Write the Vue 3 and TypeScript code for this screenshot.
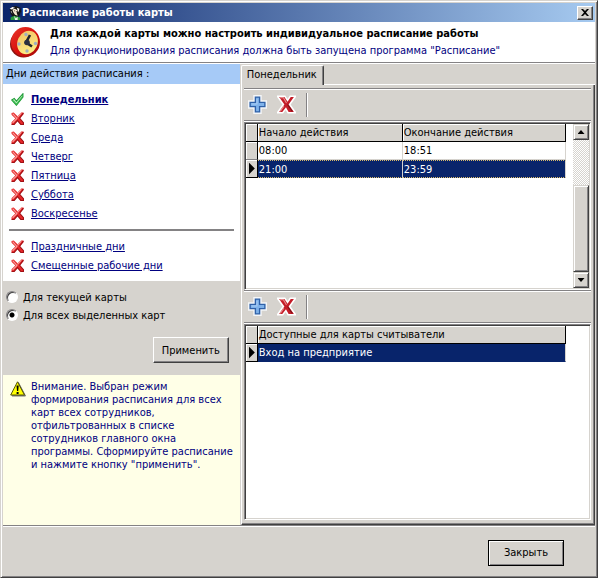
<script setup lang="ts">
import { ref } from 'vue'

interface Day {
  name: string
  active: boolean
}

const weekDays: Day[] = [
  { name: 'Понедельник', active: true },
  { name: 'Вторник', active: false },
  { name: 'Среда', active: false },
  { name: 'Четверг', active: false },
  { name: 'Пятница', active: false },
  { name: 'Суббота', active: false },
  { name: 'Воскресенье', active: false },
]
const specialDays: Day[] = [
  { name: 'Праздничные дни', active: false },
  { name: 'Смещенные рабочие дни', active: false },
]
const dayGroups: Day[][] = [weekDays, specialDays]

const intervals = [
  { start: '08:00', end: '18:51' },
  { start: '21:00', end: '23:59' },
]
const readers = ['Вход на предприятие']

const selectedDay = ref('Понедельник')
const selectedInterval = ref(1)
const selectedReader = ref(0)
const scope = ref<'current' | 'all'>('all')
</script>

<template>
  <div class="window">
    <header class="titlebar">
      <svg class="app-icon" viewBox="0 0 16 16" aria-hidden="true">
        <path d="M2 4l2-3 5-1 5 2 1 4-2 5-3 2H6L3 9z" fill="#151515" />
        <path d="M5 4l3-1 3 2-1 3 1 3-3-1-2-3z" fill="#f6e8d0" />
        <path d="M10 2l3 1-1 4zM2 3l3-2 3 1-4 2zM3 6l1 0 1 3z" fill="#fff" />
        <path d="M7 5h1v1H7zM9 6h1v1H9z" fill="#222" />
        <path d="M3 16v-3l4-2 3 1 4 1v3z" fill="#2a9a3c" />
        <path d="M7 11l2 3 2-2v4H8z" fill="#e8f4e8" />
      </svg>
      <h1>Расписание работы карты</h1>
      <button class="close" type="button" aria-label="Закрыть окно">
        <svg viewBox="0 0 8 7"><path d="M0 0h2l2 2 2-2h2L5 3.500 8 7H6L4 5 2 7H0l3-3.500z" /></svg>
      </button>
    </header>

    <section class="banner">
      <svg class="clock" viewBox="0 0 32 32" aria-hidden="true">
        <defs>
          <linearGradient id="rim" x1="0" y1="0" x2="1" y2="1">
            <stop offset="0" stop-color="#e8382c" />
            <stop offset=".5" stop-color="#d8100c" />
            <stop offset="1" stop-color="#a00a08" />
          </linearGradient>
          <linearGradient id="dial" x1="0" y1="0" x2="1" y2="1">
            <stop offset="0" stop-color="#f2c060" />
            <stop offset="1" stop-color="#fff58c" />
          </linearGradient>
        </defs>
        <ellipse cx="14.500" cy="18" rx="13.500" ry="13.500" fill="#8e1410" />
        <ellipse cx="16.500" cy="16" rx="14.500" ry="15" fill="url(#rim)" />
        <ellipse cx="18.500" cy="16.500" rx="10" ry="12" fill="url(#dial)" transform="rotate(25 18.500 16.500)" />
        <g fill="#9fb0c0">
          <circle cx="17" cy="8.500" r="1.700" />
          <circle cx="26.500" cy="17.500" r="1.700" />
          <circle cx="18" cy="25" r="1.700" />
          <circle cx="10" cy="18" r="1.700" />
        </g>
        <path d="M21 9l-4 7.500 6 4" fill="none" stroke="#23262e" stroke-width="2.600" />
        <circle cx="18" cy="16.500" r="2.800" fill="#2c3140" />
      </svg>
      <div>
        <h2>Для каждой карты можно настроить индивидуальное расписание работы</h2>
        <p>Для функционирования расписания должна быть запущена программа "Расписание"</p>
      </div>
    </section>

    <main class="content">
      <aside class="side">
        <h3>Дни действия расписания :</h3>
        <nav class="days">
          <ul v-for="(group, g) in dayGroups" :key="g">
            <li v-for="day in group" :key="day.name">
              <svg v-if="day.active" viewBox="0 0 12 12" aria-hidden="true">
                <path d="M.7 6.500l2.300-1.500 2 2.500L11 .7v3L5 11.300z" fill="#b9f2bd" stroke="#1d9a35" />
                <path d="M2 7l3 3.500L11 3" fill="none" stroke="#36b54a" />
              </svg>
              <svg v-else viewBox="0 0 12 12" aria-hidden="true">
                <path d="M.5 1l2-.5L6 4 9.500.5h2V2L8 5.800l3.500 4v1.700H9L6 8l-3 3.500H.5V9.500L4 6 .5 2.500z" fill="#e8282a" />
                <path d="M11.500 1L8 5.800l3.500 4v1.700H9L6 8l-3 3.500H.5" fill="none" stroke="#a01014" />
                <path d="M1.500 1.500L5.500 6 1.500 10M6 5l3.500-4" fill="none" stroke="#f7a3a0" />
              </svg>
              <a href="#" :class="{ current: day.name === selectedDay }" @click.prevent="selectedDay = day.name">{{ day.name }}</a>
            </li>
          </ul>
        </nav>

        <form class="scope" @submit.prevent>
          <label><input v-model="scope" type="radio" name="scope" value="current" />Для текущей карты</label>
          <label><input v-model="scope" type="radio" name="scope" value="all" />Для всех выделенных карт</label>
          <button class="button" type="submit">Применить</button>
        </form>

        <div class="note">
          <svg viewBox="0 0 16 16" aria-hidden="true">
            <path d="M8.500 1.500L15.500 15H2z" fill="#777" stroke="#777" stroke-linejoin="round" />
            <path d="M7.500.800L14.500 14H.700z" fill="#ff0" stroke="#54540a" stroke-linejoin="round" />
            <path d="M6.500 4.500h2.200L8.200 10H7z" fill="#000" />
            <path d="M6.600 11h2v2h-2z" fill="#000" />
          </svg>
          <p>Внимание. Выбран режим формирования расписания для всех карт всех сотрудников, отфильтрованных в списке сотрудников главного окна программы. Сформируйте расписание и нажмите кнопку "применить".</p>
        </div>
      </aside>

      <section class="schedule">
        <div class="tabs" role="tablist">
          <button class="tab" type="button" role="tab" aria-selected="true">{{ selectedDay }}</button>
        </div>
        <div class="page">
          <template v-for="part in ['intervals', 'readers']" :key="part">
            <div class="toolbar">
              <button type="button" aria-label="Добавить">
                <svg viewBox="0 0 18 18">
                  <path d="M6 1h6v5h5v6h-5v5H6v-5H1V6h5z" fill="#fff" stroke="#f4f6f8" stroke-width="2" />
                  <path d="M7 2h4v5h5v4h-5v5H7v-5H2V7h5z" fill="#7fb2ea" stroke="#2f61a8" stroke-width="1.300" />
                  <path d="M8.500 3.500v5h-5" fill="none" stroke="#a9cdf4" />
                </svg>
              </button>
              <button type="button" aria-label="Удалить">
                <svg viewBox="0 0 18 18">
                  <path d="M2 2h5l3 4.500L13 2h3l-5 7 5 7h-5l-2.500-4.500L5 16H2l5-7z" fill="#fff" stroke="#fff" stroke-width="3" />
                  <path d="M2 2h5l3 4.500L13 2h3l-5 7 5 7h-5l-2.500-4.500L5 16H2l5-7z" fill="#c41c28" />
                  <path d="M3 2.500h3l3 5M6.500 10.500l-3.500 5" fill="none" stroke="#e88a8c" />
                  <path d="M10 9l4.500 6.500" fill="none" stroke="#7c1018" />
                </svg>
              </button>
              <span class="separator"></span>
            </div>

            <div v-if="part === 'intervals'" class="grid-box upper">
              <div class="grid-area">
                <table>
                  <colgroup><col class="mark" /><col class="start" /><col /></colgroup>
                  <thead>
                    <tr><th></th><th>Начало действия</th><th>Окончание действия</th></tr>
                  </thead>
                  <tbody>
                    <tr
                      v-for="(row, i) in intervals"
                      :key="row.start"
                      :class="{ selected: i === selectedInterval }"
                      @click="selectedInterval = i"
                    >
                      <th><span v-if="i === selectedInterval" class="pointer"></span></th>
                      <td>{{ row.start }}</td>
                      <td>{{ row.end }}</td>
                    </tr>
                  </tbody>
                </table>
              </div>
              <div class="scrollbar">
                <button type="button" aria-label="Вверх"><span class="up"></span></button>
                <div class="track"></div>
                <div class="thumb"></div>
                <button type="button" aria-label="Вниз"><span class="down"></span></button>
              </div>
            </div>

            <div v-else class="grid-box lower">
              <div class="grid-area wide">
                <table>
                  <colgroup><col class="mark" /><col /></colgroup>
                  <thead>
                    <tr><th></th><th>Доступные для карты считыватели</th></tr>
                  </thead>
                  <tbody>
                    <tr
                      v-for="(reader, i) in readers"
                      :key="reader"
                      class="plain"
                      :class="{ selected: i === selectedReader }"
                      @click="selectedReader = i"
                    >
                      <th><span v-if="i === selectedReader" class="pointer"></span></th>
                      <td>{{ reader }}</td>
                    </tr>
                  </tbody>
                </table>
              </div>
            </div>
          </template>
        </div>
      </section>
    </main>

    <footer class="footer">
      <button class="button default" type="button">Закрыть</button>
    </footer>
  </div>
</template>

<style>
body {
  margin: 0;
  background: #d6d3ce;
}
</style>

<style scoped>
* {
  box-sizing: border-box;
}
h1, h2, h3, p, ul {
  margin: 0;
  padding: 0;
  font-size: 11px;
  font-weight: normal;
}
.window {
  display: flex;
  flex-direction: column;
  min-height: 100vh;
  padding: 1px;
  border: 1px solid;
  border-color: #d6d3ce #404040 #404040 #d6d3ce;
  box-shadow: inset 1px 1px #fff, inset -1px -1px #848284;
  background: #d6d3ce;
  color: #000;
  font-family: "DejaVu Sans Condensed", "DejaVu Sans", sans-serif;
  font-size: 11px;
  line-height: 13px;
}
button {
  font: inherit;
  color: inherit;
  margin: 0;
}
.titlebar {
  display: flex;
  align-items: center;
  height: 19px;
  margin: 1px 1px 0;
  padding: 0 2px 0 5px;
  background: linear-gradient(90deg, #0a246a, #a6caf0);
  color: #fff;
}
.titlebar h1 {
  flex: 1;
  font-weight: bold;
}
.app-icon {
  width: 14px;
  height: 14px;
}
.close {
  display: grid;
  place-items: center;
  width: 16px;
  height: 14px;
  padding: 0;
  background: #d6d3ce;
  border: 1px solid;
  border-color: #fff #404040 #404040 #fff;
  box-shadow: inset -1px -1px #848284;
  color: #000;
}
.close svg {
  width: 8px;
  height: 7px;
}
.banner {
  display: flex;
  gap: 9px;
  height: 41px;
  margin: 0 1px;
  padding: 4px 6px;
  background: #fff;
  border-bottom: 1px solid #848284;
}
.clock {
  width: 32px;
  height: 32px;
}
.banner h2 {
  font-weight: bold;
  line-height: 16px;
}
.banner p {
  color: #000080;
  line-height: 18px;
}
.content {
  display: flex;
  flex: 1;
  margin: 0 1px;
  border-top: 1px solid #fff;
}
.side {
  display: flex;
  flex-direction: column;
  flex: 0 0 40%;
}
.side h3 {
  padding: 0 3px;
  line-height: 20px;
  background: #a6caf7;
}
.days {
  padding: 6px;
  background: #fff;
}
.days ul {
  list-style: none;
}
.days ul + ul {
  margin-top: 6px;
  padding-top: 6px;
  border-top: 2px solid #848284;
}
.days li {
  display: flex;
  align-items: center;
  gap: 7px;
  height: 19px;
  padding-left: 2px;
}
.days svg {
  width: 13px;
  height: 13px;
}
.days a {
  color: #000080;
}
.days a.current {
  font-weight: bold;
}
.scope {
  display: flex;
  flex-direction: column;
  padding: 7px 11px 12px 3px;
}
.scope label {
  display: flex;
  align-items: center;
  gap: 5px;
  height: 18px;
}
.scope input {
  appearance: none;
  width: 12px;
  height: 12px;
  margin: 0;
  border: 1px solid;
  border-color: #848284 #fff #fff #848284;
  border-radius: 50%;
  background: #fff;
  box-shadow: inset 1px 1px #404040;
}
.scope input:checked {
  background: radial-gradient(circle, #000 2px, #fff 3px);
}
.button {
  width: 76px;
  height: 26px;
  padding: 0;
  background: #d6d3ce;
  border: 1px solid;
  border-color: #fff #404040 #404040 #fff;
  box-shadow: inset -1px -1px #848284;
}
.scope .button {
  align-self: flex-end;
  margin-top: 13px;
}
.button.default {
  border-color: #000;
  box-shadow: inset 1px 1px #fff, inset -1px -1px #848284;
}
.note {
  display: flex;
  flex: 1;
  gap: 5px;
  padding: 5px 4px 5px 7px;
  background: #ffffe7;
  color: #000080;
}
.note svg {
  flex: none;
  width: 16px;
  height: 16px;
  margin-top: 1px;
}
.schedule {
  display: flex;
  flex: 1;
  flex-direction: column;
  min-width: 0;
  padding-left: 1px;
}
.tabs {
  display: flex;
  height: 21px;
  padding-top: 1px;
}
.tabs::after {
  content: "";
  flex: 1;
  border-bottom: 1px solid #fff;
}
.tab {
  padding: 0 6px 3px 5px;
  background: none;
  border: solid;
  border-width: 1px 1px 0;
  border-color: #fff #404040 #fff #fff;
  border-radius: 2px 2px 0 0;
  box-shadow: inset -1px 0 #848284;
}
.page {
  display: flex;
  flex: 1;
  flex-direction: column;
  padding: 3px 3px 4px 2px;
  border: solid;
  border-width: 0 1px 1px;
  border-color: #fff #404040 #404040 #fff;
  box-shadow: inset -1px -1px #848284;
}
.toolbar {
  display: flex;
  align-items: center;
  gap: 10px;
  height: 33px;
  padding-left: 4px;
  border-top: 1px solid #848284;
  border-bottom: 1px solid #848284;
  box-shadow: inset 0 1px #fff, 0 1px #fff;
}
.toolbar button {
  width: 19px;
  height: 19px;
  padding: 0;
  background: none;
  border: 0;
}
.toolbar svg {
  display: block;
  width: 19px;
  height: 19px;
}
.separator {
  width: 2px;
  height: 24px;
  border-left: 1px solid #848284;
  border-right: 1px solid #fff;
}
.grid-box {
  display: flex;
  margin-top: 1px;
  padding: 1px;
  background: #fff;
  border: 1px solid;
  border-color: #848284 #fff #fff #848284;
  box-shadow: inset 1px 1px #404040, inset -1px -1px #d6d3ce;
}
.upper {
  height: 168px;
}
.lower {
  flex: 1;
}
.grid-area {
  flex: 1;
  padding-right: 7px;
}
.grid-area.wide {
  padding-right: 23px;
}
table {
  width: 100%;
  border-collapse: separate;
  border-spacing: 0;
  table-layout: fixed;
}
.mark {
  width: 12px;
}
.start {
  width: 145px;
}
th, td {
  height: 18px;
  padding: 0 1px;
  font-weight: normal;
  text-align: left;
  white-space: nowrap;
}
th {
  background: #d6d3ce;
  border-right: 1px solid #000;
  border-bottom: 1px solid #000;
  box-shadow: inset 1px 1px #fff;
}
tbody th {
  border-bottom-color: #848284;
}
tbody .selected th {
  border-bottom-color: #000;
}
td {
  border-right: 1px solid #d6d3ce;
  border-bottom: 1px solid #d6d3ce;
}
.selected td {
  background: #08246b;
  color: #fff;
  border-top: 1px dotted #d6b96b;
  border-bottom: 1px dotted #d6b96b;
}
.plain.selected td {
  border-top: 0;
  border-bottom: 1px solid #08246b;
}
.pointer {
  display: block;
  width: 6px;
  height: 12px;
  margin-left: 2px;
  background: #000;
  clip-path: polygon(0 0, 100% 50%, 0 100%);
}
.scrollbar {
  display: flex;
  flex-direction: column;
  width: 16px;
}
.scrollbar button, .thumb {
  background: #d6d3ce;
  border: 1px solid;
  border-color: #d6d3ce #404040 #404040 #d6d3ce;
  box-shadow: inset 1px 1px #fff, inset -1px -1px #848284;
}
.scrollbar button {
  display: grid;
  place-items: center;
  height: 16px;
  padding: 0;
}
.track {
  flex: 1;
  background: repeating-conic-gradient(#fff 0 25%, #d6d3ce 0 50%) 0 0 / 2px 2px;
}
.thumb {
  height: 87px;
}
.up, .down {
  width: 7px;
  height: 4px;
  background: #000;
}
.up {
  clip-path: polygon(50% 0, 100% 100%, 0 100%);
}
.down {
  clip-path: polygon(0 0, 100% 0, 50% 100%);
}
.footer {
  display: flex;
  justify-content: flex-end;
  align-items: center;
  height: 51px;
  margin: 0 1px;
  padding: 3px 31px 0 0;
  border-top: 1px solid #848284;
  box-shadow: inset 0 1px #fff;
}
</style>
